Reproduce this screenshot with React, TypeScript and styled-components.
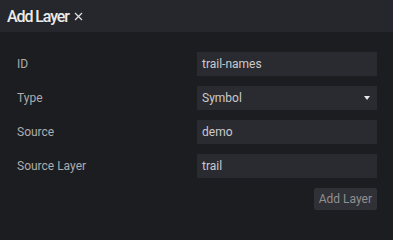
import React from 'react';
import styled, { createGlobalStyle } from 'styled-components';

const GlobalStyle = createGlobalStyle`
  html, body {
    margin: 0;
    padding: 0;
    background: #1c1d21;
    font-family: Roboto, "Liberation Sans", sans-serif;
  }
`;

const Modal = styled.div`
  width: 393px;
  height: 228px;
  background: #1c1d21;
  display: flex;
  flex-direction: column;
`;

const Header = styled.div`
  height: 32px;
  background: #26272c;
  display: flex;
  align-items: center;
  padding: 0 7px;
  box-sizing: border-box;
`;

const Title = styled.h1`
  margin: 0;
  font-size: 16px;
  font-weight: 500;
  letter-spacing: -1.1px;
  color: #ececec;
`;

const CloseButton = styled.button`
  background: none;
  border: none;
  padding: 1px 0 0 5px;
  display: flex;
  align-items: center;
  color: #e0e0e0;
  cursor: pointer;
`;

const Body = styled.div`
  padding: 20px 16px 0 17px;
  display: flex;
  flex-direction: column;
  gap: 10px;
`;

const Row = styled.div`
  display: flex;
  align-items: center;
  justify-content: space-between;
  height: 24px;
`;

const Label = styled.label`
  font-size: 12px;
  color: #acacae;
`;

const Field = styled.div`
  width: 180px;
  height: 24px;
  background: #2a2b30;
  box-sizing: border-box;
  padding: 0 6px 0 5px;
  display: flex;
  align-items: center;
  justify-content: space-between;
  font-size: 12px;
  color: #cacacc;
`;

const Arrow = styled.span`
  width: 0;
  height: 0;
  border-left: 3.5px solid transparent;
  border-right: 3.5px solid transparent;
  border-top: 4px solid #e8e8e8;
  margin-right: 1px;
`;

const Footer = styled.div`
  display: flex;
  justify-content: flex-end;
`;

const SubmitButton = styled.button`
  height: 22px;
  padding: 0 5px;
  border: none;
  border-radius: 2px;
  background: #303136;
  color: #8f8f92;
  font-family: Roboto, "Liberation Sans", sans-serif;
  font-size: 12px;
  cursor: pointer;
`;

const fields = [
  { label: 'ID', value: 'trail-names' },
  { label: 'Type', value: 'Symbol', select: true },
  { label: 'Source', value: 'demo' },
  { label: 'Source Layer', value: 'trail' },
];

export default function App() {
  return (
    <>
      <GlobalStyle />
      <Modal>
        <Header>
          <Title>Add Layer</Title>
          <CloseButton aria-label="close">
            <svg width="9" height="9" viewBox="0 0 9 9">
              <path d="M1 1L8 8M8 1L1 8" stroke="currentColor" strokeWidth="1.2" />
            </svg>
          </CloseButton>
        </Header>
        <Body>
          {fields.map(f => (
            <Row key={f.label}>
              <Label>{f.label}</Label>
              <Field>
                {f.value}
                {f.select && <Arrow />}
              </Field>
            </Row>
          ))}
          <Footer>
            <SubmitButton>Add Layer</SubmitButton>
          </Footer>
        </Body>
      </Modal>
    </>
  );
}
